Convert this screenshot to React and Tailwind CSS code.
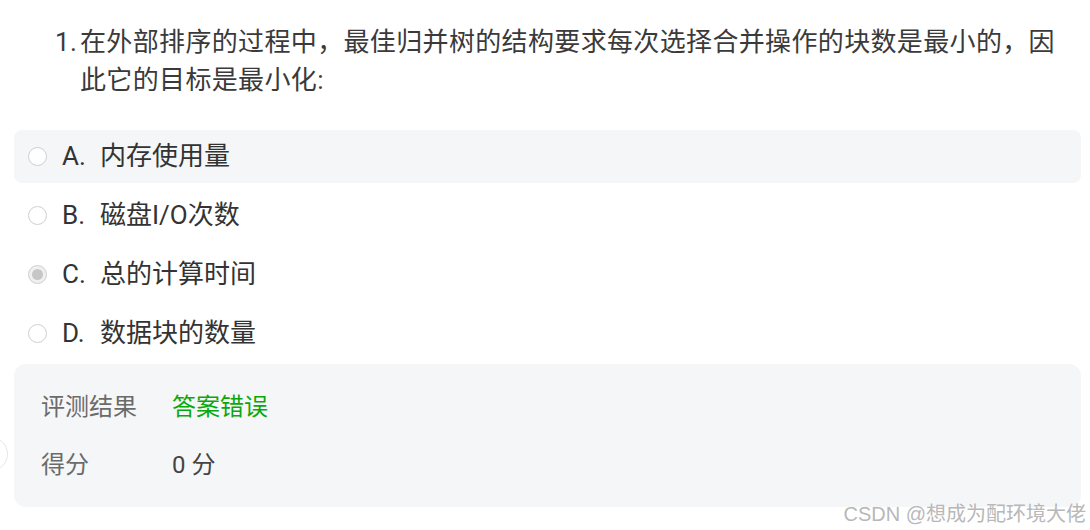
import React from "react";

const font = { fontFamily: 'Roboto, "Noto Sans CJK SC", sans-serif' };

function Radio({ checked }) {
  return (
    <span
      className={`relative flex h-[19px] w-[19px] shrink-0 items-center justify-center rounded-full border border-[#cfcfcf] ${checked ? "bg-[#f0f0f0]" : "bg-white"}`}
    >
      {checked && <span className="h-[11px] w-[11px] rounded-full bg-[#c6c6c6]" />}
    </span>
  );
}

const options = [
  { k: "A.", t: "内存使用量", hl: true },
  { k: "B.", t: "磁盘I/O次数" },
  { k: "C.", t: "总的计算时间", checked: true },
  { k: "D.", t: "数据块的数量" },
];

export default function App() {
  return (
    <div className="relative h-[530px] w-[1090px] overflow-hidden bg-white" style={font}>
      <div className="pl-[14px] pr-[9px] pt-[23px]">
        <div className="flex pl-[41px] pr-[20px] text-[26px] leading-[38px] tracking-[0.35px] text-[#3a3a3a]">
          <span className="w-[25px] shrink-0">1.</span>
          <span>在外部排序的过程中，最佳归并树的结构要求每次选择合并操作的块数是最小的，因此它的目标是最小化:</span>
        </div>
        <div className="mt-[31px] flex flex-col gap-[6px]">
          {options.map((o) => (
            <div
              key={o.k}
              className={`flex h-[53px] items-center rounded-[8px] pl-[14px] text-[26px] text-[#333333] ${o.hl ? "bg-[#f5f6f7]" : ""}`}
            >
              <Radio checked={o.checked} />
              <span className="ml-[15px] w-[38px]">{o.k}</span>
              <span>{o.t}</span>
            </div>
          ))}
        </div>
        <div className="mt-[4px] flex h-[143px] flex-col justify-center gap-[18px] rounded-[12px] bg-[#f5f6f8] pl-[27px] text-[24px]">
          <div className="flex h-[40px] items-center">
            <span className="w-[131px] text-[#6b6b6b]">评测结果</span>
            <span className="text-[#0aa80a]">答案错误</span>
          </div>
          <div className="flex h-[40px] items-center">
            <span className="w-[131px] text-[#6b6b6b]">得分</span>
            <span className="text-[#444444]">0 分</span>
          </div>
        </div>
      </div>
      <div className="absolute left-[-26px] top-[437px] h-[34px] w-[34px] rounded-full border border-[#e6e6e6] bg-white" />
      <div
        className="absolute bottom-[4px] right-[4px] text-[20px] leading-[24px] text-[#b8b8b8]"
        style={{ fontFamily: '"Liberation Sans", "Noto Sans CJK SC", sans-serif' }}
      >
        CSDN @想成为配环境大佬
      </div>
    </div>
  );
}
